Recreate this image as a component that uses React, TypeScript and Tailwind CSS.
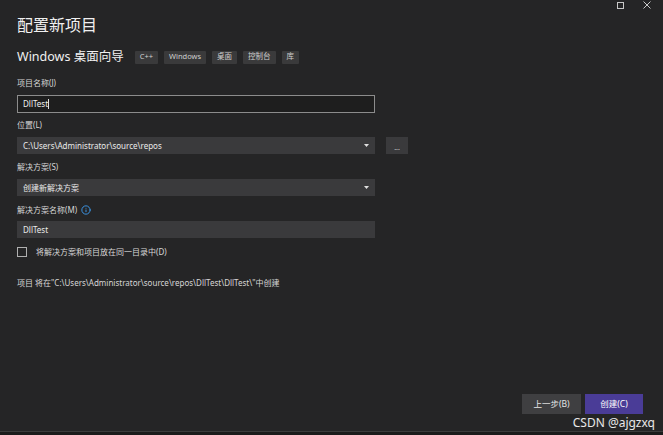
import { Info } from "lucide-react";

const font = { fontFamily: '"Noto Sans", "Noto Sans CJK SC", sans-serif' };

function Label({ children, className = "" }: { children: React.ReactNode; className?: string }) {
  return (
    <div className={`h-[12px] flex items-center text-[8px] leading-none text-[#d6d6d6] ${className}`}>
      {children}
    </div>
  );
}

function Caret() {
  return (
    <svg width="5" height="3" viewBox="0 0 5 3" className="mr-[2px]">
      <path d="M0 0h5L2.5 3z" fill="#e0e0e0" />
    </svg>
  );
}

const tags = ["C++", "Windows", "桌面", "控制台", "库"];

export default function App() {
  return (
    <div
      className="relative w-[663px] h-[435px] bg-[#252526] flex flex-col overflow-hidden text-[#dcdcdc]"
      style={font}
    >
      {/* window chrome */}
      <div className="absolute top-0 right-[12px] flex items-center gap-[19px] h-[10px]">
        <div className="w-[7px] h-[7px] border border-[#c8c8c8]" />
        <svg width="8" height="8" viewBox="0 0 8 8">
          <path d="M0.5 0.5l7 7M7.5 0.5l-7 7" stroke="#c8c8c8" strokeWidth="1" />
        </svg>
      </div>

      <div className="flex flex-col px-[17px] flex-1">
        <h1 className="mt-[13px] h-[24px] flex items-center text-[16px] leading-none text-[#f0f0f0]">
          配置新项目
        </h1>

        <div className="mt-[12px] h-[16px] flex items-center">
          <span className="text-[12.5px] leading-none text-[#f0f0f0]">Windows 桌面向导</span>
          <div className="flex items-center gap-[6px] ml-[11px]">
            {tags.map((t) => (
              <span
                key={t}
                className="h-[13px] px-[5px] flex items-center rounded-[1px] bg-[#3a3a3b] text-[7.5px] leading-none text-[#cfcfcf]"
              >
                {t}
              </span>
            ))}
          </div>
        </div>

        <Label className="mt-[12px]">项目名称(J)</Label>
        <div className="mt-[6px] w-[358px] h-[18px] border border-[#8c8c8c] bg-[#1e1e1e] flex items-center px-[5px] text-[8px] text-[#f0f0f0]">
          DllTest<span className="w-px h-[10px] bg-[#e0e0e0]" />
        </div>

        <Label className="mt-[6px]">位置(L)</Label>
        <div className="mt-[6px] flex items-center">
          <div className="w-[358px] h-[17px] bg-[#3a3a3c] flex items-center justify-between pl-[6px] pr-[4px] text-[8px] text-[#eaeaea]">
            <span>C:\Users\Administrator\source\repos</span>
            <Caret />
          </div>
          <div className="ml-[11px] w-[22px] h-[17px] bg-[#3a3a3c] flex items-end justify-center pb-[3px] text-[7px] leading-none text-[#d0d0d0]">
            ...
          </div>
        </div>

        <Label className="mt-[7px]">解决方案(S)</Label>
        <div className="mt-[6px] w-[358px] h-[17px] bg-[#3a3a3c] flex items-center justify-between pl-[6px] pr-[4px] text-[8px] text-[#eaeaea]">
          <span>创建新解决方案</span>
          <Caret />
        </div>

        <Label className="mt-[8px]">
          解决方案名称(M)
          <Info size={10} strokeWidth={2.2} className="ml-[4px] text-[#3d9bf0]" />
        </Label>
        <div className="mt-[5px] w-[358px] h-[17px] bg-[#3a3a3c] flex items-center px-[6px] text-[8px] text-[#eaeaea]">
          DllTest
        </div>

        <div className="mt-[8px] h-[12px] flex items-center text-[8px] leading-none text-[#d6d6d6]">
          <span className="w-[10px] h-[10px] border border-[#b0b0b0] mr-[9px]" />
          将解决方案和项目放在同一目录中(D)
        </div>

        <div className="mt-[19px] h-[12px] flex items-center text-[8px] leading-none text-[#d6d6d6]">
          项目 将在"C:\Users\Administrator\source\repos\DllTest\DllTest\"中创建
        </div>

        <div className="mt-auto mb-[17px] flex justify-end gap-[4px] pr-[3px]">
          <button className="w-[59px] h-[20px] bg-[#3f3f41] text-[8.5px] text-[#e6e6e6]">上一步(B)</button>
          <button className="w-[58px] h-[20px] bg-[#4a3c97] text-[8.5px] text-[#ffffff]">创建(C)</button>
        </div>
      </div>

      <div className="h-px bg-[#3c3c3c]" />
      <div className="h-[3px] bg-[#1b1b1b]" />

      {/* watermark */}
      <div
        className="absolute right-[8px] bottom-[6px] text-[12px] leading-none text-white/90"
        style={{ fontFamily: '"Noto Sans", sans-serif' }}
      >
        CSDN @ajgzxq
      </div>
    </div>
  );
}
